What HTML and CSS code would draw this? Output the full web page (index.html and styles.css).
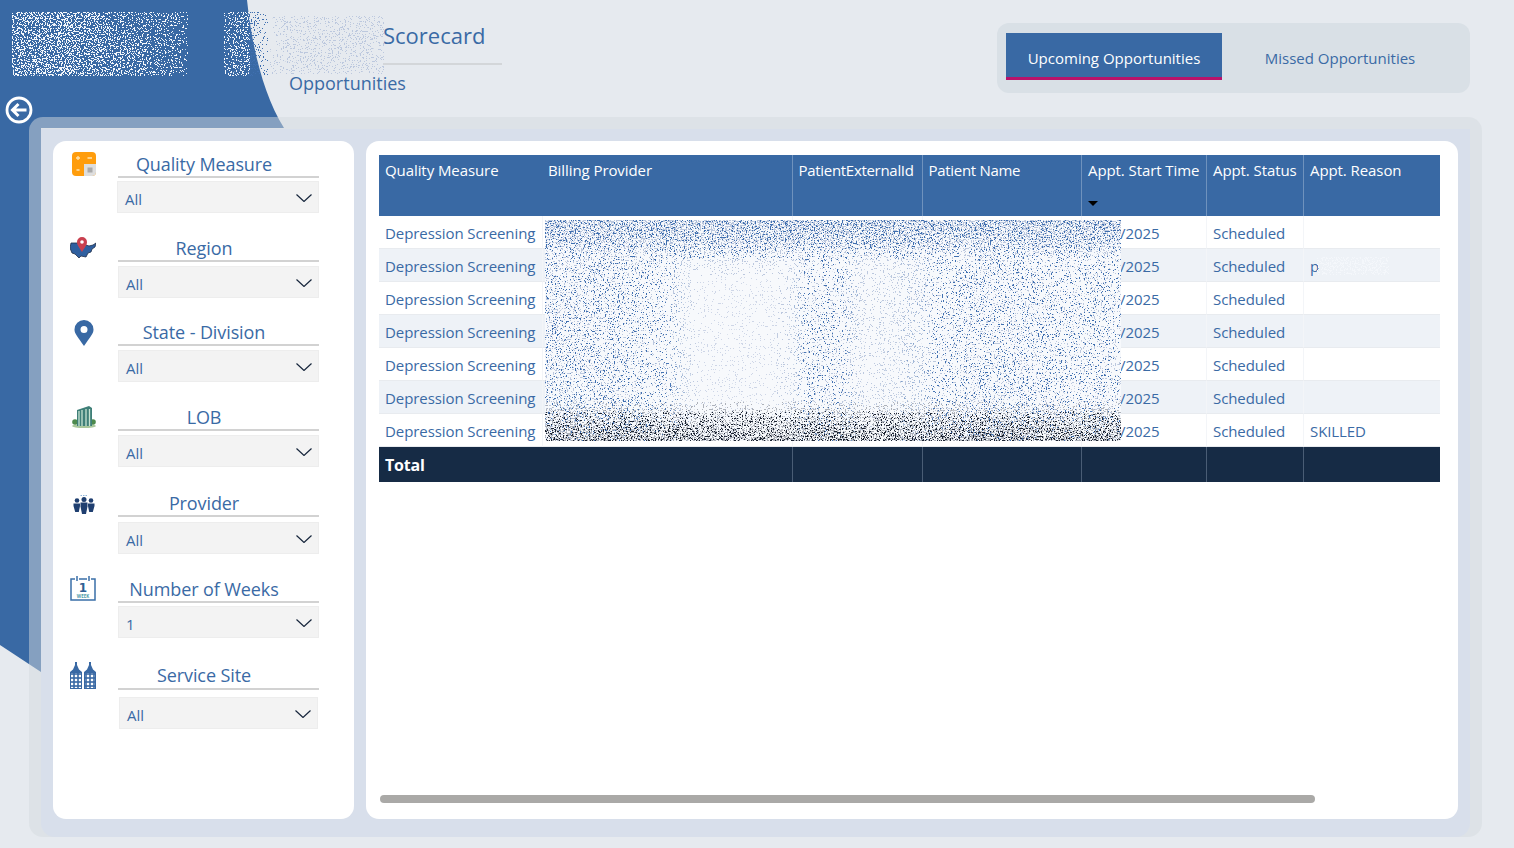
FILE: index.html
```html
<!DOCTYPE html>
<html lang="en">
<head>
  <meta charset="UTF-8">
  <title>Scorecard - Opportunities</title>
  <link rel="stylesheet" href="styles.css">
</head>
<body>
  <!-- speckle filters used for the blurred out areas -->
  <svg class="defs" aria-hidden="true">
    <defs>
      <filter id="speck-white" x="0" y="0" width="100%" height="100%" color-interpolation-filters="sRGB">
        <feTurbulence type="fractalNoise" baseFrequency="0.73 0.67" numOctaves="3" seed="3" result="n"/>
        <feColorMatrix in="n" values="0 0 0 0 0  0 0 0 0 0  0 0 0 0 0  0 0 0 2.600 -0.8" result="a"/>
        <feComposite in="a" in2="SourceAlpha" operator="arithmetic" k2="1" k3="1" k4="-1" result="d"/>
        <feComponentTransfer in="d" result="m"><feFuncA type="linear" slope="60"/></feComponentTransfer>
        <feFlood flood-color="#f4f7fb"/>
        <feComposite in2="m" operator="in"/>
      </filter>
      <filter id="speck-pale" x="0" y="0" width="100%" height="100%" color-interpolation-filters="sRGB">
        <feTurbulence type="fractalNoise" baseFrequency="0.71 0.77" numOctaves="3" seed="21" result="n"/>
        <feColorMatrix in="n" values="0 0 0 0 0  0 0 0 0 0  0 0 0 0 0  0 0 0 2.600 -0.8" result="a"/>
        <feComposite in="a" in2="SourceAlpha" operator="arithmetic" k2="1" k3="1" k4="-1" result="d"/>
        <feComponentTransfer in="d" result="m"><feFuncA type="linear" slope="60"/></feComponentTransfer>
        <feFlood flood-color="#bcc8de"/>
        <feComposite in2="m" operator="in"/>
      </filter>
      <filter id="speck-blue" x="0" y="0" width="100%" height="100%" color-interpolation-filters="sRGB">
        <feTurbulence type="fractalNoise" baseFrequency="0.79 0.69" numOctaves="3" seed="8" result="n"/>
        <feColorMatrix in="n" values="0 0 0 0 0  0 0 0 0 0  0 0 0 0 0  0 0 0 2.600 -0.8" result="a"/>
        <feComposite in="a" in2="SourceAlpha" operator="arithmetic" k2="1" k3="1" k4="-1" result="d"/>
        <feComponentTransfer in="d" result="m"><feFuncA type="linear" slope="60"/></feComponentTransfer>
        <feFlood flood-color="#3f6fb0"/>
        <feComposite in2="m" operator="in"/>
      </filter>
      <filter id="speck-grey" x="0" y="0" width="100%" height="100%" color-interpolation-filters="sRGB">
        <feTurbulence type="fractalNoise" baseFrequency="0.67 0.75" numOctaves="3" seed="30" result="n"/>
        <feColorMatrix in="n" values="0 0 0 0 0  0 0 0 0 0  0 0 0 0 0  0 0 0 2.600 -0.8" result="a"/>
        <feComposite in="a" in2="SourceAlpha" operator="arithmetic" k2="1" k3="1" k4="-1" result="d"/>
        <feComponentTransfer in="d" result="m"><feFuncA type="linear" slope="60"/></feComponentTransfer>
        <feFlood flood-color="#adb1b9"/>
        <feComposite in2="m" operator="in"/>
      </filter>
      <filter id="speck-dark" x="0" y="0" width="100%" height="100%" color-interpolation-filters="sRGB">
        <feTurbulence type="fractalNoise" baseFrequency="0.77 0.73" numOctaves="3" seed="13" result="n"/>
        <feColorMatrix in="n" values="0 0 0 0 0  0 0 0 0 0  0 0 0 0 0  0 0 0 2.600 -0.8" result="a"/>
        <feComposite in="a" in2="SourceAlpha" operator="arithmetic" k2="1" k3="1" k4="-1" result="d"/>
        <feComponentTransfer in="d" result="m"><feFuncA type="linear" slope="60"/></feComponentTransfer>
        <feFlood flood-color="#1c2433"/>
        <feComposite in2="m" operator="in"/>
      </filter>

      <linearGradient id="fade-logo" x1="0" x2="1" y1="0" y2="0">
        <stop offset="0" stop-color="#fff" stop-opacity=".38"/>
        <stop offset=".3" stop-color="#fff" stop-opacity=".42"/>
        <stop offset=".75" stop-color="#fff" stop-opacity=".28"/>
        <stop offset=".96" stop-color="#fff" stop-opacity=".18"/>
        <stop offset="1" stop-color="#fff" stop-opacity=".04"/>
      </linearGradient>
      <linearGradient id="fade-mid" x1="0" x2="1" y1="0" y2="0">
        <stop offset="0" stop-color="#fff" stop-opacity=".2"/>
        <stop offset="1" stop-color="#fff" stop-opacity=".34"/>
      </linearGradient>
      <linearGradient id="fade-edge" x1="0" x2="1" y1="0" y2="0">
        <stop offset="0" stop-color="#fff" stop-opacity=".28"/>
        <stop offset="1" stop-color="#fff" stop-opacity=".02"/>
      </linearGradient>
      <linearGradient id="fade-name" x1="0" x2="1" y1="0" y2="0">
        <stop offset="0" stop-color="#fff" stop-opacity=".03"/>
        <stop offset=".14" stop-color="#fff" stop-opacity=".16"/>
        <stop offset="1" stop-color="#fff" stop-opacity=".2"/>
      </linearGradient>
      <linearGradient id="fade-sides" x1="0" x2="1" y1="0" y2="0">
        <stop offset="0" stop-color="#fff" stop-opacity=".2"/>
        <stop offset=".12" stop-color="#fff" stop-opacity=".18"/>
        <stop offset=".2" stop-color="#fff" stop-opacity=".06"/>
        <stop offset=".27" stop-color="#fff" stop-opacity=".01"/>
        <stop offset=".4" stop-color="#fff" stop-opacity=".01"/>
        <stop offset=".48" stop-color="#fff" stop-opacity=".12"/>
        <stop offset=".56" stop-color="#fff" stop-opacity=".05"/>
        <stop offset=".66" stop-color="#fff" stop-opacity=".06"/>
        <stop offset=".76" stop-color="#fff" stop-opacity=".18"/>
        <stop offset=".88" stop-color="#fff" stop-opacity=".13"/>
        <stop offset="1" stop-color="#fff" stop-opacity=".13"/>
      </linearGradient>
      <linearGradient id="fade-dots" x1="0" x2="1" y1="0" y2="0">
        <stop offset="0" stop-color="#fff" stop-opacity=".07"/>
        <stop offset=".12" stop-color="#fff" stop-opacity=".06"/>
        <stop offset=".2" stop-color="#fff" stop-opacity=".02"/>
        <stop offset=".26" stop-color="#fff" stop-opacity="0"/>
        <stop offset=".42" stop-color="#fff" stop-opacity="0"/>
        <stop offset=".48" stop-color="#fff" stop-opacity=".03"/>
        <stop offset=".56" stop-color="#fff" stop-opacity="0"/>
        <stop offset=".66" stop-color="#fff" stop-opacity=".01"/>
        <stop offset=".76" stop-color="#fff" stop-opacity=".05"/>
        <stop offset="1" stop-color="#fff" stop-opacity=".03"/>
      </linearGradient>
      <linearGradient id="fade-top" x1="0" x2="0" y1="0" y2="1">
        <stop offset="0" stop-color="#fff" stop-opacity=".5"/>
        <stop offset=".1" stop-color="#fff" stop-opacity=".38"/>
        <stop offset=".2" stop-color="#fff" stop-opacity=".1"/>
        <stop offset=".26" stop-color="#fff" stop-opacity="0"/>
      </linearGradient>
      <linearGradient id="fade-top-dots" x1="0" x2="0" y1="0" y2="1">
        <stop offset="0" stop-color="#fff" stop-opacity=".2"/>
        <stop offset=".1" stop-color="#fff" stop-opacity=".14"/>
        <stop offset=".18" stop-color="#fff" stop-opacity="0"/>
      </linearGradient>
      <linearGradient id="fade-bottom" x1="0" x2="0" y1="0" y2="1">
        <stop offset=".82" stop-color="#fff" stop-opacity="0"/>
        <stop offset=".9" stop-color="#fff" stop-opacity=".3"/>
        <stop offset="1" stop-color="#fff" stop-opacity=".5"/>
      </linearGradient>
      <linearGradient id="fade-bottom-dots" x1="0" x2="0" y1="0" y2="1">
        <stop offset=".86" stop-color="#fff" stop-opacity="0"/>
        <stop offset=".93" stop-color="#fff" stop-opacity=".16"/>
        <stop offset="1" stop-color="#fff" stop-opacity=".26"/>
      </linearGradient>
      <pattern id="windows" width="4" height="4" patternUnits="userSpaceOnUse">
        <rect width="2.4" height="2.4" x=".8" y=".8" fill="#fff"/>
      </pattern>
    </defs>
  </svg>

  <!-- blue corner behind the panel -->
  <svg class="backdrop" viewBox="0 0 1514 848" aria-hidden="true">
    <path d="M0 0H247C252 48 264 96 284 128H41V672L0 645Z" fill="#3969a4"/>
  </svg>

  <div class="page">
    <header class="top">
      <svg class="logo" viewBox="0 0 176 64" aria-hidden="true">
        <rect width="176" height="64" fill="url(#fade-logo)" filter="url(#speck-white)"/>
      </svg>
      <svg class="org-name" viewBox="0 0 160 64" aria-hidden="true">
        <rect width="26" height="64" fill="url(#fade-mid)" filter="url(#speck-white)"/>
        <rect x="24" width="20" height="64" fill="url(#fade-edge)" filter="url(#speck-blue)"/>
        <rect x="46" y="4" width="114" height="58" fill="url(#fade-name)" filter="url(#speck-pale)"/>
      </svg>
      <svg class="back" viewBox="0 0 28 28" aria-hidden="true">
        <circle cx="14" cy="14" r="12" fill="none" stroke="#fff" stroke-width="2.800"/>
        <path d="M21.500 14H8M13.500 8L7.500 14L13.500 20" fill="none" stroke="#fff" stroke-width="3"/>
      </svg>
      <div class="titles">
        <div class="title">Scorecard</div>
        <div class="subtitle">Opportunities</div>
      </div>
      <nav class="tabs">
        <div class="tab active">Upcoming Opportunities</div>
        <div class="tab">Missed Opportunities</div>
      </nav>
    </header>

    <main class="panel">
      <div class="panel-inner">
        <aside class="card sidebar">

          <div class="filter f-quality">
            <svg class="icon" viewBox="0 0 24 24" aria-hidden="true">
              <rect width="24" height="24" rx="4" fill="#ff9d0d"/>
              <path d="M12 12H24V20A4 4 0 0 1 20 24H12Z" fill="#dedede"/>
              <rect x="15.500" y="15.500" width="5" height="5" fill="#aaa"/>
              <path d="M4 6H8M6 4V8M15.500 6H20M4.500 18H7.500" stroke="#ffe3b0" stroke-width="1.300"/>
            </svg>
            <div class="filter-body">
              <div class="filter-label">Quality Measure</div>
              <div class="dropdown"><span>All</span><svg class="chev" viewBox="0 0 16 8"><path d="M.5 .5L8 7.500L15.500 .5" fill="none" stroke="#17263c" stroke-width="1.200"/></svg></div>
            </div>
          </div>

          <div class="filter f-region">
            <svg class="icon" viewBox="0 0 26 22" aria-hidden="true">
              <path d="M1 6L10 6L19 9L23 8L26 6L25 10L22 12L21 15L18 16L16 20L11 19L9 21L5 17L2 16L0 11Z" fill="#2f5f9f" stroke="#1f2f4a" stroke-width=".8"/>
              <path d="M12 15C9 10 7 8 7 5A5 5 0 0 1 17 5C17 8 15 10 12 15Z" fill="#c9404f"/>
              <circle cx="12" cy="5" r="1.800" fill="#fff"/>
            </svg>
            <div class="filter-body">
              <div class="filter-label">Region</div>
              <div class="dropdown"><span>All</span><svg class="chev" viewBox="0 0 16 8"><path d="M.5 .5L8 7.500L15.500 .5" fill="none" stroke="#17263c" stroke-width="1.200"/></svg></div>
            </div>
          </div>

          <div class="filter f-state">
            <svg class="icon" viewBox="0 0 20 26" aria-hidden="true">
              <path fill-rule="evenodd" d="M10 26C4 17 .5 14 .5 9.500A9.500 9.500 0 0 1 19.500 9.500C19.500 14 16 17 10 26ZM10 6A3.500 3.500 0 1 0 10 13A3.500 3.500 0 0 0 10 6Z" fill="#3969a4"/>
            </svg>
            <div class="filter-body">
              <div class="filter-label">State - Division</div>
              <div class="dropdown"><span>All</span><svg class="chev" viewBox="0 0 16 8"><path d="M.5 .5L8 7.500L15.500 .5" fill="none" stroke="#17263c" stroke-width="1.200"/></svg></div>
            </div>
          </div>

          <div class="filter f-lob">
            <svg class="icon" viewBox="0 0 24 22" aria-hidden="true">
              <ellipse cx="12" cy="20" rx="12" ry="2" fill="#a9c79b"/>
              <circle cx="3" cy="16" r="2.800" fill="#4d8a4d"/>
              <circle cx="21" cy="16" r="2.800" fill="#4d8a4d"/>
              <path d="M5 4L17 0L20 2V20H5Z" fill="#3f7f78"/>
              <path d="M7 5V20M10 4V20M14 3V20M17.500 3V20" stroke="#c7e3d2" stroke-width="1.300"/>
            </svg>
            <div class="filter-body">
              <div class="filter-label">LOB</div>
              <div class="dropdown"><span>All</span><svg class="chev" viewBox="0 0 16 8"><path d="M.5 .5L8 7.500L15.500 .5" fill="none" stroke="#17263c" stroke-width="1.200"/></svg></div>
            </div>
          </div>

          <div class="filter f-provider">
            <svg class="icon" viewBox="0 0 22 20" aria-hidden="true">
              <path d="M7.500 1.500H14.500" stroke="#8fb6dc" stroke-width="1.200" stroke-dasharray="1.500 1"/>
              <g fill="#1f3f70">
                <circle cx="4" cy="6.500" r="2.300"/><circle cx="18" cy="6.500" r="2.300"/><circle cx="11" cy="5.500" r="2.500"/>
                <path d="M.5 9.500H7V12L5.800 18H2.200L.5 12Z"/>
                <path d="M15 9.500H21.500V12L19.800 18H16.200L15 12Z"/>
                <path d="M7.500 8.500H14.500V12.500L13 20H9L7.500 12.500Z"/>
              </g>
            </svg>
            <div class="filter-body">
              <div class="filter-label">Provider</div>
              <div class="dropdown"><span>All</span><svg class="chev" viewBox="0 0 16 8"><path d="M.5 .5L8 7.500L15.500 .5" fill="none" stroke="#17263c" stroke-width="1.200"/></svg></div>
            </div>
          </div>

          <div class="filter f-weeks">
            <svg class="icon" viewBox="0 0 26 25" aria-hidden="true">
              <path d="M5 3H1V24H25V3H21M9 3H17" fill="none" stroke="#3a6fa8" stroke-width="1.500"/>
              <path d="M7 0V5M19 0V5" stroke="#3a6fa8" stroke-width="1.500"/>
              <text x="13" y="15.500" class="cal-day">1</text>
              <text x="13" y="21.800" class="cal-week">WEEK</text>
            </svg>
            <div class="filter-body">
              <div class="filter-label">Number of Weeks</div>
              <div class="dropdown"><span>1</span><svg class="chev" viewBox="0 0 16 8"><path d="M.5 .5L8 7.500L15.500 .5" fill="none" stroke="#17263c" stroke-width="1.200"/></svg></div>
            </div>
          </div>

          <div class="filter f-site">
            <svg class="icon" viewBox="0 0 26 27" aria-hidden="true">
              <path d="M0 27V10L3 7.500L5 3V0H7V3L9 7.500L12 10V27Z" fill="#3969a4"/>
              <path d="M14 27V10L17 7.500L19 3V0H21V3L23 7.500L26 10V27Z" fill="#3969a4"/>
              <rect x="1" y="11" width="10" height="15" fill="url(#windows)"/>
              <rect x="15" y="11" width="10" height="15" fill="url(#windows)"/>
            </svg>
            <div class="filter-body">
              <div class="filter-label">Service Site</div>
              <div class="dropdown"><span>All</span><svg class="chev" viewBox="0 0 16 8"><path d="M.5 .5L8 7.500L15.500 .5" fill="none" stroke="#17263c" stroke-width="1.200"/></svg></div>
            </div>
          </div>

        </aside>

        <section class="card content">
          <div class="table-wrap">
            <table class="grid">
              <colgroup>
                <col class="c1"><col class="c2"><col class="c3"><col class="c4"><col class="c5"><col class="c6"><col class="c7">
              </colgroup>
              <thead>
                <tr>
                  <th class="no-line">Quality Measure</th>
                  <th class="no-line">Billing Provider</th>
                  <th class="tight">PatientExternalId</th>
                  <th class="tight">Patient Name</th>
                  <th>Appt. Start Time<i class="sort"></i></th>
                  <th>Appt. Status</th>
                  <th>Appt. Reason</th>
                </tr>
              </thead>
              <tbody>
                <tr><td>Depression Screening</td><td></td><td></td><td></td><td class="date">/2025</td><td>Scheduled</td><td></td></tr>
                <tr><td>Depression Screening</td><td></td><td></td><td></td><td class="date">/2025</td><td>Scheduled</td><td class="reason">p<svg class="reason-blur" viewBox="0 0 72 18" aria-hidden="true"><rect width="72" height="18" fill="#fff" fill-opacity=".36" filter="url(#speck-white)"/></svg></td></tr>
                <tr><td>Depression Screening</td><td></td><td></td><td></td><td class="date">/2025</td><td>Scheduled</td><td></td></tr>
                <tr><td>Depression Screening</td><td></td><td></td><td></td><td class="date">/2025</td><td>Scheduled</td><td></td></tr>
                <tr><td>Depression Screening</td><td></td><td></td><td></td><td class="date">/2025</td><td>Scheduled</td><td></td></tr>
                <tr><td>Depression Screening</td><td></td><td></td><td></td><td class="date">/2025</td><td>Scheduled</td><td></td></tr>
                <tr><td>Depression Screening</td><td></td><td></td><td></td><td class="date">/2025</td><td>Scheduled</td><td>SKILLED</td></tr>
              </tbody>
              <tfoot>
                <tr><td class="no-line">Total</td><td class="no-line"></td><td></td><td></td><td></td><td></td><td></td></tr>
              </tfoot>
            </table>
            <svg class="table-blur" viewBox="0 0 576 221" aria-hidden="true">
              <rect width="576" height="221" fill="#f7f9fc"/>
              <rect width="576" height="221" fill="url(#fade-sides)" filter="url(#speck-pale)"/>
              <rect width="576" height="221" fill="url(#fade-dots)" filter="url(#speck-blue)"/>
              <rect width="576" height="221" fill="url(#fade-top)" filter="url(#speck-pale)"/>
              <rect width="576" height="221" fill="url(#fade-top-dots)" filter="url(#speck-blue)"/>
              <rect width="576" height="221" fill="url(#fade-bottom)" filter="url(#speck-grey)"/>
              <rect width="576" height="221" fill="url(#fade-bottom-dots)" filter="url(#speck-dark)"/>
            </svg>
          </div>
          <div class="scrollbar"></div>
        </section>
      </div>
    </main>
  </div>
</body>
</html>
```

FILE: styles.css
```css
* { box-sizing: border-box; }
html, body { margin: 0; height: 100%; }
body { background: #e6eaef; font-family: "Open Sans", "Noto Sans", sans-serif; color: #3a6aa5; overflow: hidden; }

.defs { position: absolute; width: 0; height: 0; }
.backdrop { position: absolute; left: 0; top: 0; width: 1514px; height: 848px; }

.page { position: relative; height: 848px; padding: 0 32px 11px 29px; display: flex; flex-direction: column; }

/* header */
.top { height: 117px; display: flex; justify-content: space-between; flex-shrink: 0; }
.logo { position: absolute; left: 12px; top: 12px; width: 176px; height: 64px; }
.org-name { position: absolute; left: 224px; top: 12px; width: 160px; height: 64px; }
.back { position: absolute; left: 5px; top: 96px; width: 28px; height: 28px; }

.titles { margin-left: 260px; padding-top: 19px; width: 213px; }
.title { margin-left: 94px; height: 46px; line-height: 33px; font-size: 22px; border-bottom: 2px solid #d3d6d9; }
.subtitle { margin-top: 5px; line-height: 26px; font-size: 18px; }

.tabs { margin-top: 23px; height: 70px; width: 473px; margin-right: 12px; padding: 10px 12px 13px 9px; display: flex; background: #d9e0e6; border-radius: 12px; }
.tab { flex: 1; line-height: 50px; text-align: center; font-size: 15px; }
.tab.active { flex: 0 0 216px; background: #3969a4; color: #fff; border-bottom: 3px solid #b8126b; }

/* panel */
.panel { flex: 1; padding: 12px 12px 0; border-radius: 14px; background: rgba(212, 218, 222, .49); }
.panel-inner { height: 100%; display: flex; gap: 12px; padding: 12px 12px 18px; background: #d8dfeb; border-radius: 0 0 14px 14px; }
.card { background: #fff; border-radius: 13px; }

/* sidebar */
.sidebar { flex: 0 0 301px; padding: 11px 0 0 17px; }
.filter { display: flex; width: 249px; }
.icon { flex: 0 0 auto; width: 26px; }
.filter-body { margin-left: auto; width: 201px; }
.filter-label { height: 26px; padding-right: 29px; line-height: 25px; text-align: center; font-size: 18px; letter-spacing: -.1px; border-bottom: 2px solid #d2d2d2; }
.dropdown { height: 32px; margin-top: 3px; padding: 0 6px 0 7px; display: flex; align-items: center; justify-content: space-between; background: #f3f3f3; border: 1px solid #ededed; font-size: 15px; }
.dropdown span { padding-top: 3px; }
.chev { width: 16px; height: 8px; margin-top: 1px; }

.f-quality .icon { height: 24px; margin-left: 2px; width: 24px; }
.f-quality .dropdown { margin-left: -1px; }
.f-region { margin-top: 23px; }
.f-region .icon { height: 22px; margin-top: 1px; }
.f-region .dropdown { margin-top: 4px; }
.f-state { margin-top: 22px; }
.f-state .icon { height: 26px; width: 20px; margin-left: 4px; }
.f-state .dropdown { margin-top: 4px; }
.f-lob { margin-top: 23px; }
.f-lob .icon { height: 22px; width: 24px; margin-left: 2px; margin-top: 1px; }
.f-lob .dropdown { margin-top: 4px; }
.f-provider { margin-top: 24px; }
.f-provider .icon { height: 20px; width: 22px; margin-left: 3px; margin-top: 3px; }
.f-provider .dropdown { margin-top: 5px; }
.f-weeks { margin-top: 23px; }
.f-weeks .icon { height: 25px; margin-top: -1px; }
.f-site { margin-top: 25px; }
.f-site .icon { height: 27px; margin-top: -1px; }
.f-site .filter-label { height: 27px; }
.f-site .dropdown { margin: 7px 1px 0; }

.cal-day { font: 700 12px "DejaVu Sans", sans-serif; fill: #2f5f95; text-anchor: middle; }
.cal-week { font: 700 4.500px "Open Sans", sans-serif; fill: #4e9aa8; text-anchor: middle; }

/* table */
.content { flex: 1; padding: 14px 18px 16px 13px; display: flex; flex-direction: column; }
.table-wrap { position: relative; flex: 1; }
.grid { width: 1061px; border-collapse: separate; border-spacing: 0; table-layout: fixed; font-size: 15px; letter-spacing: -.08px; }
.c1 { width: 163px; } .c2 { width: 250px; } .c3 { width: 130px; } .c4 { width: 159px; }
.c5 { width: 125px; } .c6 { width: 97px; } .c7 { width: 137px; }

.grid th, .grid td { padding: 0 5px 0 6px; text-align: left; font-weight: 400; white-space: nowrap; overflow: hidden; }
.grid thead tr { height: 61px; background: #3969a4; color: #fff; }
.grid th { vertical-align: top; padding-top: 4px; line-height: 22px; border-left: 1px solid #6f92bd; }
.grid th.no-line { border-left: 0; }
.grid th.tight { letter-spacing: -.3px; padding-left: 5.500px; }
.sort { display: block; width: 0; margin: 20px 0 0; border: 5px solid transparent; border-top-color: #000; border-bottom: 0; }

.grid tbody tr { height: 33px; }
.grid tbody tr:nth-child(even) { background: #eef2f7; }
.grid tbody td { padding-top: 1px; border-left: 1px solid #f3f5f8; border-bottom: 1px solid #e8ebef; }
.grid tbody td:first-child { border-left: 0; }
.grid tbody td.date { padding-left: 38px; }
.reason { position: relative; }
.reason-blur { position: absolute; left: 13px; top: 8px; width: 72px; height: 18px; }

.grid tfoot tr { height: 35px; background: #162b45; color: #fff; }
.grid tfoot td { border-left: 1px solid #4a5d75; font-weight: 700; font-size: 16px; }
.grid tfoot td.no-line { border-left: 0; letter-spacing: -.2px; }

.table-blur { position: absolute; left: 166px; top: 65px; width: 576px; height: 221px; }

.scrollbar { width: 935px; height: 8px; margin-left: 1px; background: #aaa9a7; border-radius: 4px; }
```
